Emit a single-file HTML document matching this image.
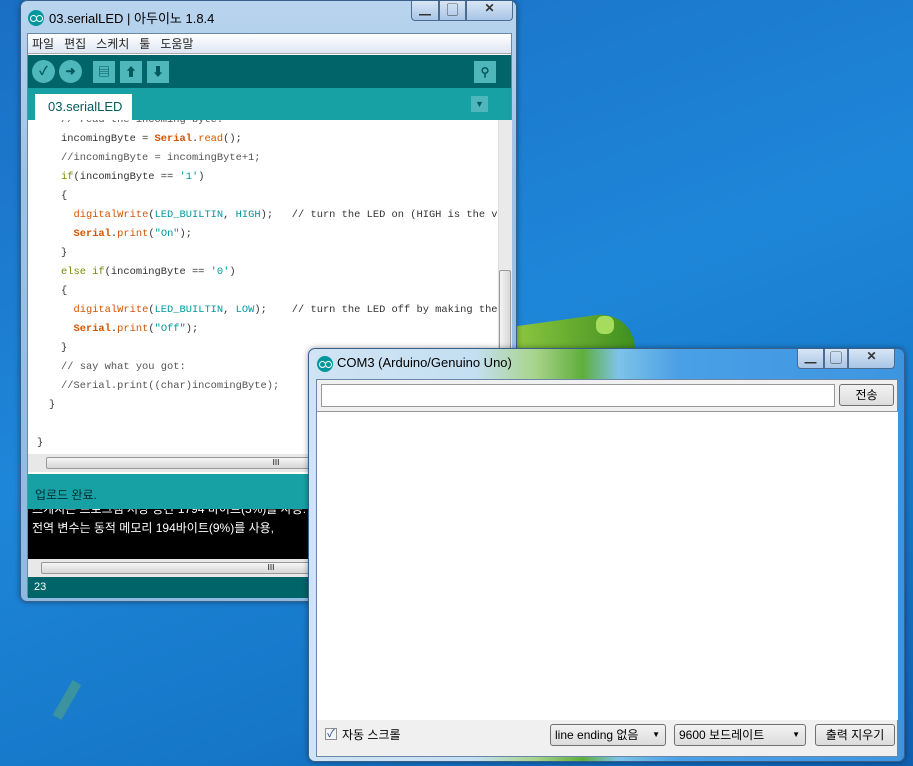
<!DOCTYPE html>
<html><head><meta charset="utf-8"><style>
*{margin:0;padding:0;box-sizing:border-box}
body{width:913px;height:766px;overflow:hidden;position:relative;background:linear-gradient(160deg,#1a6fc4 0%,#1e86d8 45%,#1677c8 75%,#0e5fb0 100%);font-family:"Liberation Sans","Noto Sans CJK KR",sans-serif;font-size:12px}
.abs{position:absolute}
.win{position:absolute;border:1px solid #3a5f8a;border-radius:7px;background:linear-gradient(180deg,#b9d4ee 0%,#9cc2e6 30%,#8fb9e1 100%);box-shadow:0 0 6px rgba(0,0,0,.4)}
.ctl{position:absolute;top:0;height:20px;border:1px solid #4b6b93;border-top:none;background:linear-gradient(#d8e6f5,#a9c5e6);text-align:center;font-weight:bold;color:#333}
.logo{position:absolute;width:16px;height:16px;border-radius:50%;background:#00979c}
.logo:before,.logo:after{content:"";position:absolute;top:5px;width:5px;height:5px;border:1.5px solid #fff;border-radius:50%}
.logo:before{left:2px}.logo:after{left:8px}
.code div{height:19px;line-height:19px;white-space:pre}
.o{color:#d35400}.ob{color:#d35400;font-weight:bold}.t{color:#00979c}.k{color:#728e00}.g{color:#555}
.tb{position:absolute;top:59px;width:22px;height:22px;background:#4db7bb;color:#00595c;text-align:center;line-height:22px;font-weight:bold}
.btn{position:absolute;border:1px solid #707070;border-radius:3px;background:linear-gradient(#f2f2f2,#dcdcdc);text-align:center;font-size:12px}
</style></head><body>
<!-- desktop decor -->
<div class="abs" style="left:515px;top:318px;width:120px;height:40px;background:linear-gradient(90deg,#8cc63f,#3f8f1f);border-radius:0 40px 0 0;transform:skewY(-8deg)"></div>
<div class="abs" style="left:596px;top:316px;width:18px;height:18px;background:#a6dc5e;border-radius:40%"></div>
<div class="abs" style="left:62px;top:680px;width:10px;height:40px;background:#7fc04e;opacity:.35;transform:rotate(30deg)"></div>

<!-- main window -->
<div class="win" style="left:20px;top:0;width:497px;height:602px">
 <div class="logo" style="left:7px;top:9px"></div>
 <div class="abs" style="left:28px;top:7px;font-size:13px;color:#000">03.serialLED | 아두이노 1.8.4</div>
 <div class="ctl" style="left:390px;width:28px;border-radius:0 0 0 4px">▁</div>
 <div class="ctl" style="left:418px;width:27px">▢</div>
 <div class="ctl" style="left:445px;width:47px;border-radius:0 0 4px 0">✕</div>
 <div class="abs" style="left:6px;top:32px;width:485px;height:564px;background:#fff;border:1px solid #6a87a8">
  <div class="abs" style="left:0;top:0;width:483px;height:20px;background:linear-gradient(#fff,#dde6f3);border-bottom:1px solid #aaa;font-size:12px;line-height:20px;padding-left:4px;color:#222">파일 &nbsp; 편집 &nbsp; 스케치 &nbsp; 툴 &nbsp; 도움말</div>
  <div class="abs" style="left:0;top:21px;width:483px;height:33px;background:#006468">
   <div class="abs" style="left:4px;top:5px;width:23px;height:23px;border-radius:50%;background:#4db7bb;color:#00595c;text-align:center;line-height:23px;font-weight:bold">✓</div>
   <div class="abs" style="left:31px;top:5px;width:23px;height:23px;border-radius:50%;background:#4db7bb;color:#00595c;text-align:center;line-height:23px;font-weight:bold">➜</div>
  </div>
  <div class="tb" style="left:65px;top:27px">▤</div>
  <div class="tb" style="left:92px;top:27px">⬆</div>
  <div class="tb" style="left:119px;top:27px">⬇</div>
  <div class="tb" style="left:446px;top:27px">⚲</div>
  <div class="abs" style="left:0;top:54px;width:483px;height:32px;background:#17a1a5"></div>
  <div class="abs" style="left:7px;top:60px;width:97px;height:26px;background:#fff;color:#005c5f;font-size:13px;line-height:26px;padding-left:13px">03.serialLED</div>
  <div class="abs" style="left:443px;top:62px;width:17px;height:16px;background:#4db7bb;color:#005c5f;font-size:9px;text-align:center;line-height:16px">▼</div>
  <div class="abs code" style="left:0;top:86px;width:470px;height:334px;overflow:hidden;font-family:'Liberation Mono','Noto Sans CJK KR',monospace;font-size:10.4px;color:#333;padding-left:33px">
   <div style="margin-top:-9px" class="g">// read the incoming byte:</div>
   <div>incomingByte = <span class="ob">Serial</span>.<span class="o">read</span>();</div>
   <div class="g">//incomingByte = incomingByte+1;</div>
   <div><span class="k">if</span>(incomingByte == <span class="t">'1'</span>)</div>
   <div>{</div>
   <div>  <span class="o">digitalWrite</span>(<span class="t">LED_BUILTIN</span>, <span class="t">HIGH</span>);   // turn the LED on (HIGH is the volt</div>
   <div>  <span class="ob">Serial</span>.<span class="o">print</span>(<span class="t">"On"</span>);</div>
   <div>}</div>
   <div><span class="k">else if</span>(incomingByte == <span class="t">'0'</span>)</div>
   <div>{</div>
   <div>  <span class="o">digitalWrite</span>(<span class="t">LED_BUILTIN</span>, <span class="t">LOW</span>);    // turn the LED off by making the vo</div>
   <div>  <span class="ob">Serial</span>.<span class="o">print</span>(<span class="t">"Off"</span>);</div>
   <div>}</div>
   <div class="g">// say what you got:</div>
   <div class="g">//Serial.print((char)incomingByte);</div>
   <div style="margin-left:-12px">}</div>
   <div></div>
   <div style="margin-left:-24px">}</div>
  </div>
  <div class="abs" style="left:470px;top:86px;width:14px;height:334px;background:#eaeaea;border-left:1px solid #ddd"></div>
  <div class="abs" style="left:471px;top:236px;width:12px;height:184px;background:linear-gradient(90deg,#f4f4f4,#d8d8d8);border:1px solid #999;border-radius:2px"></div>
  <div class="abs" style="left:0;top:420px;width:483px;height:18px;background:#e8e8e8"></div>
  <div class="abs" style="left:18px;top:423px;width:460px;height:12px;background:linear-gradient(#f6f6f6,#d6d6d6);border:1px solid #999;border-radius:2px;font-size:8px;text-align:center;line-height:10px">III</div>
  <div class="abs" style="left:0;top:440px;width:483px;height:35px;background:#17a1a5;color:#002f31;font-size:12px;padding:12px 0 0 7px">업로드 완료.</div>
  <div class="abs" style="left:0;top:475px;width:483px;height:50px;background:#000;color:#fff;font-size:12px;line-height:19px;padding-left:4px;overflow:hidden;white-space:nowrap">
   <div style="margin-top:-9px">스케치는 프로그램 저장 공간 1794 바이트(5%)를 사용.</div>
   <div>전역 변수는 동적 메모리 194바이트(9%)를 사용,</div>
  </div>
  <div class="abs" style="left:0;top:525px;width:483px;height:18px;background:#e8e8e8"></div>
  <div class="abs" style="left:13px;top:528px;width:460px;height:12px;background:linear-gradient(#f6f6f6,#d6d6d6);border:1px solid #999;border-radius:2px;font-size:8px;text-align:center;line-height:10px">III</div>
  <div class="abs" style="left:0;top:543px;width:483px;height:21px;background:#006468;color:#fff;font-size:11px;line-height:21px;padding-left:6px">23</div>
 </div>
</div>

<!-- serial monitor -->
<div class="win" style="left:308px;top:348px;width:597px;height:414px;background:linear-gradient(90deg,#cfe4f4 0%,#c4dff2 28%,#a9d48a 38%,#5fae3c 46%,#7ec3e8 52%,#4aa0e6 62%,#3d95e0 100%)">
 <div class="logo" style="left:8px;top:7px"></div>
 <div class="abs" style="left:28px;top:6px;font-size:13px;color:#000">COM3 (Arduino/Genuino Uno)</div>
 <div class="ctl" style="left:488px;width:27px;border-radius:0 0 0 4px">▁</div>
 <div class="ctl" style="left:515px;width:24px">▢</div>
 <div class="ctl" style="left:539px;width:47px;border-radius:0 0 4px 0">✕</div>
 <div class="abs" style="left:7px;top:30px;width:582px;height:378px;background:#f0f0f0;border:1px solid #6a87a8">
  <div class="abs" style="left:4px;top:4px;width:514px;height:23px;background:#fff;border:1px solid #999"></div>
  <div class="btn" style="left:522px;top:4px;width:55px;height:22px;line-height:20px">전송</div>
  <div class="abs" style="left:0;top:31px;width:581px;height:309px;background:#fff;border-top:1px solid #999"></div>
  <div class="abs" style="left:8px;top:348px;width:12px;height:12px;border:1px solid #8f8f8f;background:#f3f6fb;font-size:11px;line-height:10px;color:#254a8f;text-align:center">✓</div>
  <div class="abs" style="left:25px;top:346px;font-size:12px">자동 스크롤</div>
  <div class="btn" style="left:233px;top:344px;width:116px;height:22px;line-height:20px;text-align:left;padding-left:4px">line ending 없음 <span style="position:absolute;right:5px;font-size:8px">▼</span></div>
  <div class="btn" style="left:357px;top:344px;width:132px;height:22px;line-height:20px;text-align:left;padding-left:4px">9600 보드레이트 <span style="position:absolute;right:5px;font-size:8px">▼</span></div>
  <div class="btn" style="left:498px;top:344px;width:80px;height:22px;line-height:20px">출력 지우기</div>
 </div>
</div>
</body></html>
